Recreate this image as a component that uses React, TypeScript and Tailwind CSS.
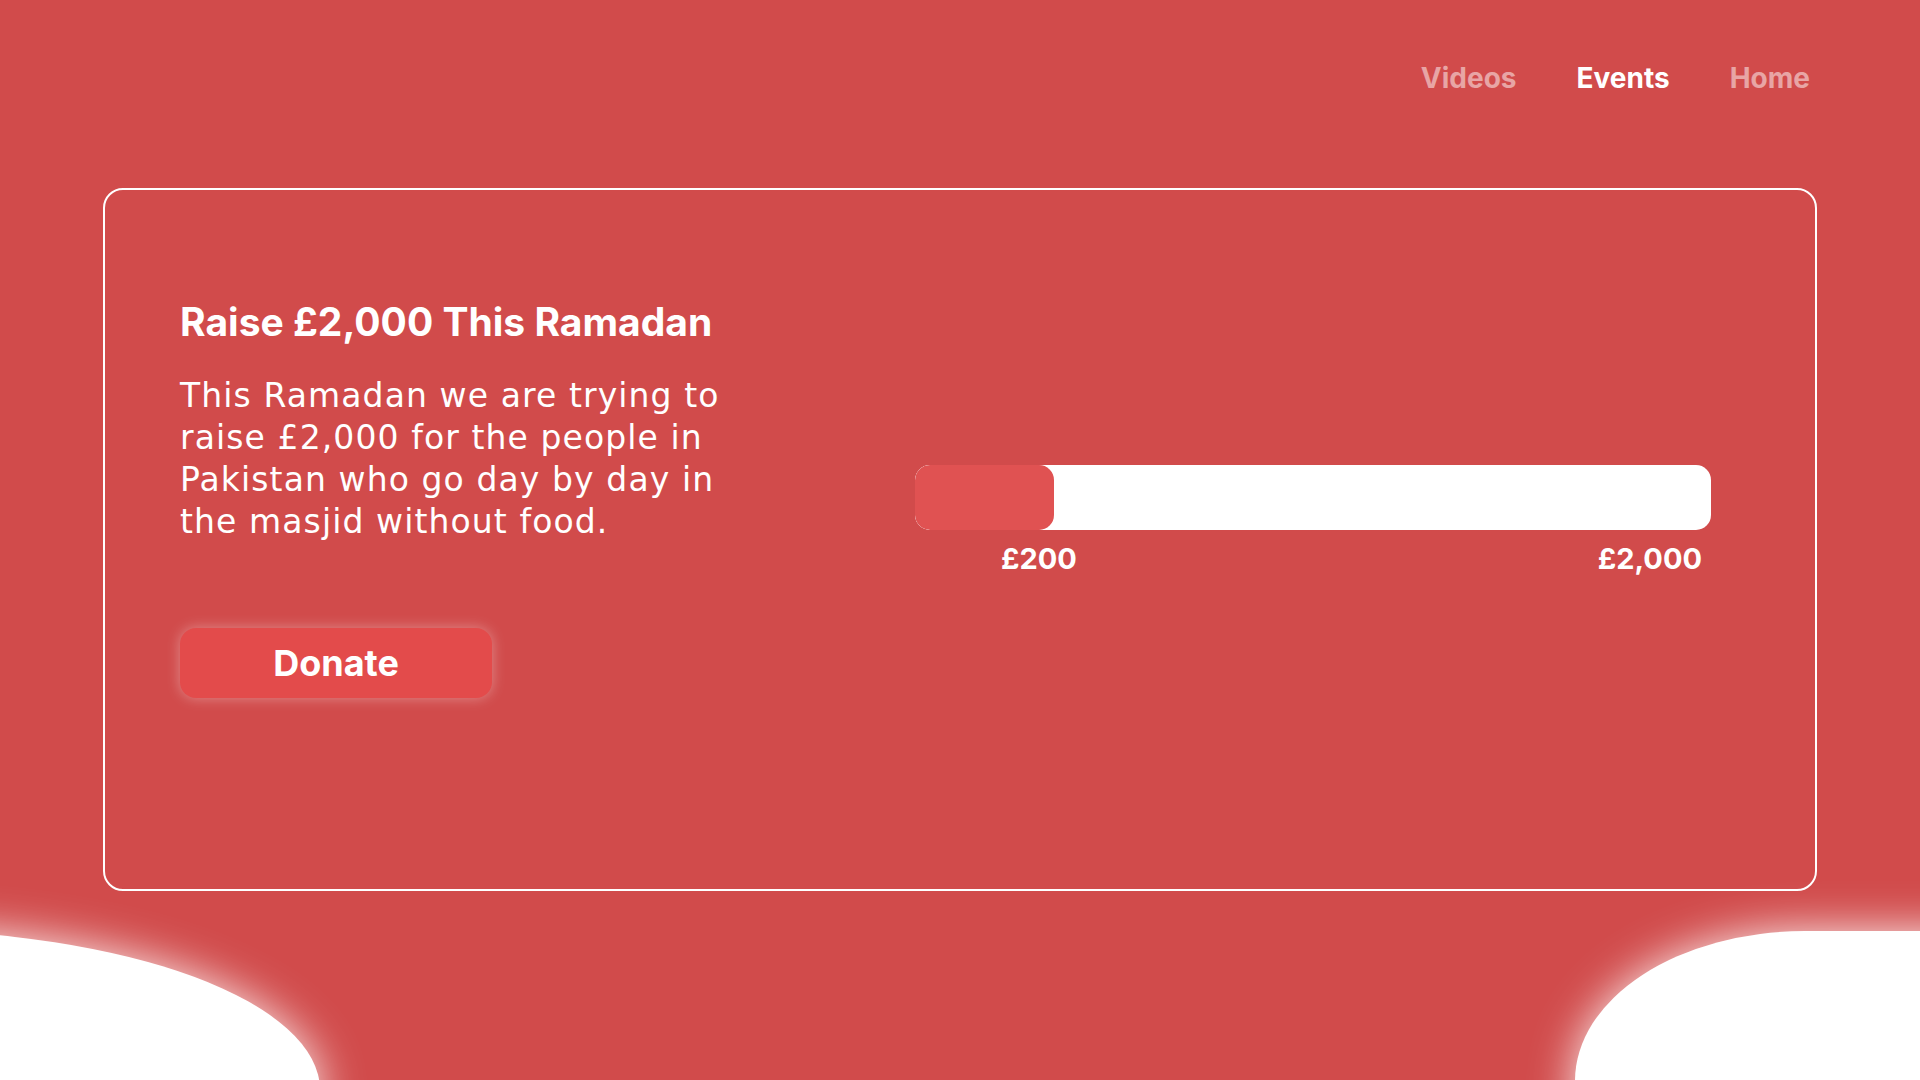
const heading = { fontFamily: "Inter, 'Liberation Sans', sans-serif" };
const body = { fontFamily: "'DejaVu Sans', Verdana, sans-serif" };

function NavBar() {
  return (
    <nav className="flex justify-end items-start h-[188px] pr-[110px] pt-[61px]" style={heading}>
      <div className="flex gap-[60px] text-[28px] leading-[34px] font-bold">
        <a className="text-white/50">Videos</a>
        <a className="text-white">Events</a>
        <a className="text-white/50">Home</a>
      </div>
    </nav>
  );
}

function Progress() {
  return (
    <div className="w-[796px] mr-[104px] ml-auto pt-[46px]">
      <div className="h-[65px] w-full bg-white rounded-[15px] overflow-hidden">
        <div className="h-full w-[139px] bg-[#e05252] rounded-[15px]" />
      </div>
      <div
        className="flex justify-between mt-[11px] text-[29px] leading-[36px] font-bold text-white"
        style={heading}
      >
        <span className="ml-[86px]">£200</span>
        <span className="mr-[9px]">£2,000</span>
      </div>
    </div>
  );
}

export default function App() {
  return (
    <div className="relative w-full h-screen overflow-hidden bg-[#d14b4b]">
      <NavBar />

      <div className="relative z-10 mx-[103px] h-[703px] border-2 border-white rounded-[20px] flex items-center pb-[84px]">
        <div className="pl-[75px] w-[640px]">
          <h1 className="text-[39px] leading-[47px] font-bold text-white mb-[30px]" style={heading}>
            Raise £2,000 This Ramadan
          </h1>
          <p className="w-[570px] text-[33px] leading-[42px] tracking-[1.1px] text-white" style={body}>
            This Ramadan we are trying to raise £2,000 for the people in Pakistan who go day by day in
            the masjid without food.
          </p>
          <button
            className="mt-[85px] w-[312px] h-[70px] rounded-2xl bg-[#e34b4b] text-white text-[36px] font-bold shadow-[0_0_14px_rgba(255,255,255,0.35)]"
            style={heading}
          >
            Donate
          </button>
        </div>
        <Progress />
      </div>

      {/* bottom blobs */}
      <div className="absolute left-[-540px] top-[930px] w-[860px] h-[320px] rounded-[50%] bg-white shadow-[0_0_45px_rgba(255,255,255,0.9)]" />
      <div className="absolute left-[1575px] top-[931px] w-[500px] h-[300px] bg-white rounded-tl-[230px_150px] shadow-[0_0_45px_rgba(255,255,255,0.9)]" />
    </div>
  );
}
